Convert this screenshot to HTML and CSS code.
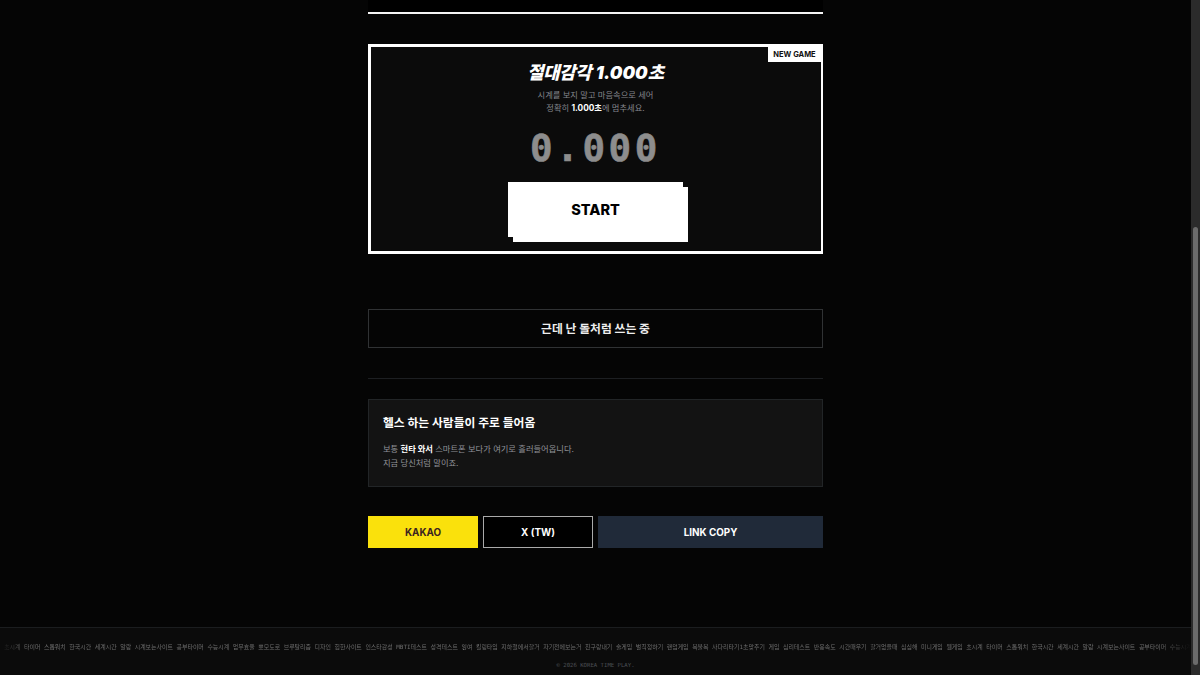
FILE: index.html
```html
<!DOCTYPE html>
<html lang="ko">
<head>
<meta charset="utf-8">
<title>Korea Time Play</title>
<link rel="stylesheet" href="styles.css">
</head>
<body>
<div class="page">
  <main class="column">
    <div class="panel-end"></div>
    <section class="game">
      <span class="badge">NEW GAME</span>
      <h2 class="game-title">절대감각 <span class="num">1.000</span>초</h2>
      <p class="game-text">시계를 보지 말고 마음속으로 세어<br>정확히 <b>1.000초</b>에 멈추세요.</p>
      <div class="timer">0.000</div>
      <button class="start">START</button>
    </section>
    <button class="toggle">근데 난 돌처럼 쓰는 중</button>
    <hr class="rule">
    <section class="info">
      <h3 class="info-title">헬스 하는 사람들이 주로 들어옴</h3>
      <p class="info-text">보통 <b>현타 와서</b> 스마트폰 보다가 여기로 흘러들어옵니다.<br>지금 당신처럼 말이죠.</p>
    </section>
    <div class="share">
      <button class="btn kakao">KAKAO</button>
      <button class="btn twitter">X (TW)</button>
      <button class="btn copy">LINK COPY</button>
    </div>
  </main>
  <footer class="footer">
    <div class="ticker">초시계 타이머 스톱워치 한국시간 세계시간 알람 시계보는사이트 공부타이머 수능시계 업무효율 뽀모도로 브루탈리즘 디자인 힙한사이트 인스타감성 MBTI테스트 성격테스트 잉여 킬링타임 지하철에서할거 자기전에보는거 친구랑내기 술게임 벌칙정하기 랜덤게임 복불복 사다리타기1초맞추기 게임 심리테스트 반응속도 시간때우기 할거없을때 심심해 미니게임 웹게임 초시계 타이머 스톱워치 한국시간 세계시간 알람 시계보는사이트 공부타이머 수능시계</div>
    <div class="copyright">© 2026 KOREA TIME PLAY.</div>
  </footer>
</div>
<div class="scrollbar"><div class="thumb"></div></div>
</body>
</html>
```
FILE: styles.css
```css
* { box-sizing: border-box; }
body {
  margin: 0;
  height: 675px;
  overflow: hidden;
  display: flex;
  background: #050505;
  color: #fff;
  font-family: Inter, "Noto Sans CJK KR", sans-serif;
}
button { font-family: inherit; padding: 0; border-radius: 0; }
h2, h3, p { margin: 0; }
.page {
  width: 1191px;
  height: 675px;
  display: flex;
  flex-direction: column;
  align-items: center;
}
.column { width: 455px; height: 627px; }
.panel-end { height: 14px; background: #000; border-bottom: 2.5px solid #f4f4f4; }
.game {
  position: relative;
  height: 210px;
  margin-top: 30px;
  padding-top: 13px;
  border: 3px solid #fff;
  border-width: 3px 2px 3px 3px;
  background: #0b0b0b;
  text-align: center;
}
.badge {
  position: absolute;
  top: -1px;
  right: 0;
  width: 53px;
  height: 16px;
  background: #fff;
  color: #111;
  font-size: 7.5px;
  font-weight: 700;
  line-height: 17px;
}
.game-title {
  height: 26px;
  padding-right: 1px;
  font-size: 17.7px;
  font-weight: 900;
  font-style: italic;
  line-height: 26px;
  letter-spacing: -.3px;
  word-spacing: 1.2px;
  white-space: nowrap;
}
.num { letter-spacing: .05px; }
.game-text {
  margin-top: 3px;
  padding-right: 1px;
  color: #85878d;
  font-size: 8.28px;
  line-height: 12.5px;
}
.game-text b, .info-text b { color: #fff; }
.timer {
  height: 46px;
  margin-top: 11px;
  padding-right: 1px;
  color: #8d8d8d;
  font-family: "DejaVu Sans Mono", monospace;
  font-size: 37.5px;
  font-weight: 700;
  line-height: 46px;
  letter-spacing: 3.6px;
  -webkit-text-stroke: .6px #8d8d8d;
}
.start {
  display: block;
  width: 175px;
  height: 55px;
  margin: 11px 0 0 137px;
  border: 0;
  background: #fff;
  box-shadow: 5px 5px 0 #fff;
  color: #000;
  font-size: 14.5px;
  font-weight: 800;
}
.toggle {
  display: block;
  width: 455px;
  height: 39px;
  margin-top: 55px;
  padding-bottom: 2px;
  border: 1px solid #303234;
  background: transparent;
  color: #eee;
  font-size: 11.8px;
  font-weight: 700;
}
.rule { height: 1px; margin: 30px 0 20px; border: 0; background: #1d1f22; }
.info {
  height: 88px;
  padding: 14px 14px 0;
  border: 1px solid #222527;
  background: #131313;
}
.info-title { font-size: 11.8px; line-height: 18px; font-weight: 700; }
.info-text { margin-top: 10px; color: #92949a; font-size: 8.28px; line-height: 14.4px; }
.share { display: grid; grid-template-columns: 110px 110px 225px; gap: 5px; margin-top: 29px; }
.btn { height: 32px; border: 0; color: #fff; font-size: 9.85px; font-weight: 700; }
.kakao { background: #fae10c; color: #3b2420; }
.twitter { border: 1px solid #aaa; background: #000; }
.copy { background: #202a39; }
.footer {
  width: 1191px;
  height: 48px;
  border-top: 1px solid #1b1d1f;
  background: #0b0b0b;
  font-family: "DejaVu Sans Mono", "Noto Sans CJK KR", monospace;
  font-size: 5.94px;
}
.ticker {
  height: 10px;
  margin-top: 14px;
  padding-left: 4px;
  overflow: hidden;
  color: #6c6c6c;
  line-height: 10px;
  white-space: nowrap;
  mask-image: linear-gradient(90deg, transparent, #000 28px, #000 1160px, transparent);
}
.copyright { margin-top: 8px; color: #4c4f55; font-size: 5.65px; text-align: center; line-height: 10px; }
.scrollbar { width: 9px; height: 675px; padding: 227px 2px 0; background: #2b2b2b; }
.thumb { height: 438px; border-radius: 3px; background: #6b6b6b; }
```
